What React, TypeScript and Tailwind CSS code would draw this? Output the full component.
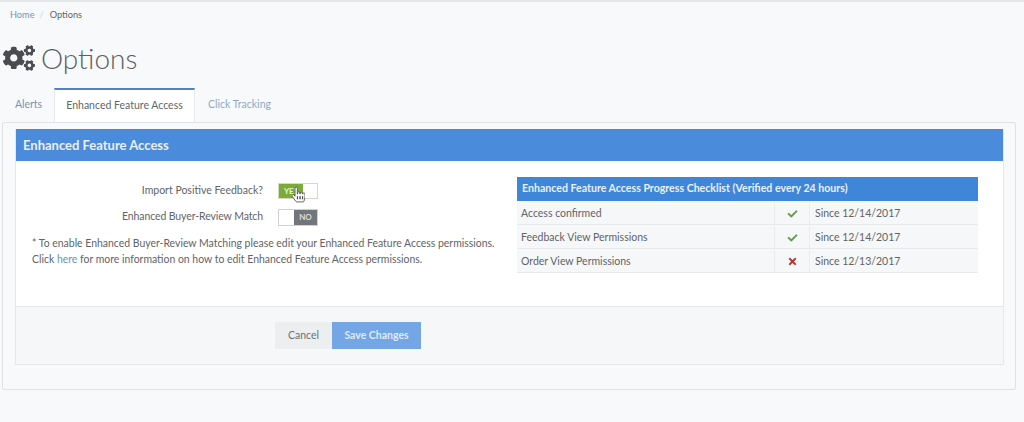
import React from "react";
import { FaCogs, FaCheck, FaTimes, FaHandPointer } from "react-icons/fa";

const rows = [
  { name: "Access confirmed", ok: true, since: "Since 12/14/2017" },
  { name: "Feedback View Permissions", ok: true, since: "Since 12/14/2017" },
  { name: "Order View Permissions", ok: false, since: "Since 12/13/2017" },
];

export default function App() {
  return (
    <div className="h-[422px] w-[1024px] overflow-hidden bg-[#f8f9fb] font-['Lato','Liberation_Sans',sans-serif] text-[#5f6469]">
      <div className="h-[2px] bg-[#e4e6e8]" />
      <div className="flex h-[25px] items-center gap-[5px] pl-[10px] pt-[1px] text-[9.2px]">
        <span className="text-[#7396b6]">Home</span>
        <span className="text-[#d0d3d6]">/</span>
        <span className="ml-[1px] text-[#5f6469]">Options</span>
      </div>
      <div className="flex h-[61px] items-center pl-[3px] pt-[1px]">
        <FaCogs className="h-[28px] w-[32px] text-[#4a4c4f]" />
        <span className="ml-[6px] text-[28px] font-light leading-none text-[#5a5f65]">Options</span>
      </div>
      <div className="relative z-10 flex h-[34px] items-stretch pl-[2px]">
        <div className="flex w-[52px] items-center justify-center pl-[1px] text-[10.5px] text-[#7396b6]">Alerts</div>
        <div className="flex w-[141px] items-center justify-center border-x border-t-2 border-x-[#e6e8ea] border-t-[#5583bd] bg-white text-[10.5px] text-[#62676c]">
          Enhanced Feature Access
        </div>
        <div className="flex w-[89px] items-center justify-center text-[10.5px] text-[#8fa9c4]">Click Tracking</div>
      </div>
      <div className="mx-[2px] box-border h-[268px] w-[1014px] rounded-[2px] border border-[#e0e3e6] pl-[12px] pt-[6px]">
        <div className="w-[989px] border-x border-b border-[#e6e8ea]">
          <div className="flex h-[32px] items-center bg-[#4a8bdb] pl-[7px] pt-[1px] text-[13px] font-bold text-[#e9f0fa]">
            Enhanced Feature Access
          </div>
          <div className="flex h-[145px] bg-white">
            <div className="w-[501px] pl-[16px] pt-[21px] text-[10.5px]">
              <div className="flex h-[18px] items-center">
                <span className="w-[231px] text-right">Import Positive Feedback?</span>
                <div className="relative ml-[15px] flex h-[16px] w-[40px] border border-[#d6dac4] bg-white">
                  <div className="flex w-[24px] items-center justify-center bg-[#7cab38] text-[8px] font-bold text-[#e8f2d8]">YES</div>
                  <FaHandPointer className="absolute left-[13px] top-[2px] h-[17px] w-[13px] fill-white stroke-[#444] stroke-[28px]" />
                </div>
              </div>
              <div className="mt-[8px] flex h-[18px] items-center">
                <span className="w-[231px] text-right tracking-[-0.1px]">Enhanced Buyer-Review Match</span>
                <div className="ml-[15px] flex h-[17px] w-[40px] justify-end border border-[#cfd1d4] bg-white">
                  <div className="flex w-[23px] items-center justify-center bg-[#72767c] text-[8px] font-bold text-[#d9dbdf]">NO</div>
                </div>
              </div>
              <p className="mt-[9px] text-[10.45px] leading-[16px]">
                * To enable Enhanced Buyer-Review Matching please edit your Enhanced Feature Access permissions.
                <br />
                Click <span className="text-[#6a92b8]">here</span> for more information on how to edit Enhanced Feature Access permissions.
              </p>
            </div>
            <div className="w-[461px] pt-[16px]">
              <div className="flex h-[24px] items-center bg-[#3f86d8] pl-[5px] text-[10.6px] font-bold text-[#e9f0fa]">
                Enhanced Feature Access Progress Checklist (Verified every 24 hours)
              </div>
              {rows.map((r) => (
                <div key={r.name} className="flex h-[24px] items-stretch border-b border-[#e8eaec] bg-[#f6f7f8] pt-[2px] text-[10.5px]">
                  <div className="flex w-[257px] items-center pl-[4px]">{r.name}</div>
                  <div className="flex w-[36px] items-center justify-center border-x border-[#eaecee]">
                    {r.ok ? <FaCheck className="h-[10px] w-[11px] text-[#6b9a57]" /> : <FaTimes className="h-[11px] w-[9px] text-[#b23a35]" />}
                  </div>
                  <div className="flex flex-1 items-center pl-[5px]">{r.since}</div>
                </div>
              ))}
            </div>
          </div>
          <div className="flex h-[58px] items-start border-t border-[#e4e6e8] bg-[#f6f7f9] pl-[259px] pt-[15px]">
            <div className="flex h-[27px] w-[57px] items-center justify-center bg-[#eceef0] text-[10.5px] text-[#6b7075]">Cancel</div>
            <div className="flex h-[27px] w-[89px] items-center justify-center bg-[#74a5e4] text-[10.5px] font-bold text-[#dfeaf8]">Save Changes</div>
          </div>
        </div>
      </div>
    </div>
  );
}
